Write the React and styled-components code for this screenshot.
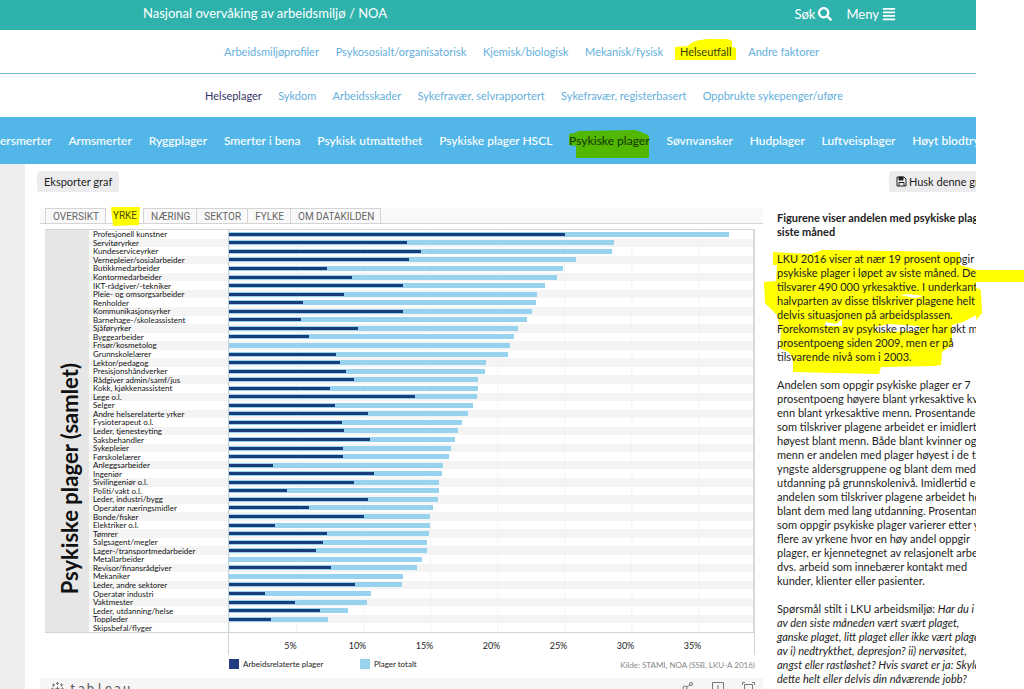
import React from "react";
import styled, { createGlobalStyle } from "styled-components";
import { FaAlignJustify, FaSearch } from "react-icons/fa";

const GlobalStyle = createGlobalStyle`
  * {
    box-sizing: border-box;
  }

  body {
    margin: 0;
    background: #fff;
    color: #222;
    font-family: Lato, "Open Sans", sans-serif;
    font-size: 11px;
  }

  a {
    color: inherit;
    text-decoration: none;
  }
`;

// Page frame
const Screen = styled.div`
  position: relative;
  height: 100vh;
  overflow: hidden;
`;

const Site = styled.div`
  height: 100%;
  margin-right: 48px;
  overflow: hidden;
`;

// Header
const Header = styled.header`
  display: flex;
  align-items: center;
  justify-content: space-between;
  height: 30px;
  padding: 0 80px 4px 143px;
  background: #2fb2ac;
  color: #fff;
`;

const SiteTitle = styled.a`
  font-size: 13px;
`;

const HeaderTools = styled.div`
  display: flex;
  gap: 14px;
`;

const HeaderButton = styled.button`
  display: flex;
  align-items: center;
  gap: 3px;
  padding: 2px 0 0;
  border: 0;
  background: none;
  color: #fff;
  font: inherit;
  font-size: 13px;

  svg {
    font-size: 14px;
  }
`;

// Navigation
const NavRow = styled.nav`
  display: flex;
  align-items: center;
  height: ${(props) => (props.$divided ? "44px" : "43px")};
  padding-left: ${(props) => props.$indent};
  border-bottom: ${(props) => (props.$divided ? "1px solid #74b9e4" : "0")};
  color: #64afdc;
`;

const NavList = styled.div`
  display: flex;
  flex: none;
  justify-content: space-between;
  width: ${(props) => props.$width};
  white-space: nowrap;
`;

const TopicBar = styled.nav`
  display: flex;
  align-items: center;
  height: 47px;
  background: #52b7e8;
  color: #fff;
  font-size: 12px;
  font-weight: 500;
`;

const NavLink = styled.a`
  position: relative;
  color: ${(props) => props.$color || "inherit"};
`;

const LinkText = styled.span`
  position: relative;
`;

// Highlighter strokes
const Marker = styled.svg`
  position: absolute;
  top: ${(props) => props.$top};
  left: ${(props) => props.$left};
  overflow: visible;
`;

const MarginMarker = styled.svg`
  position: absolute;
  top: 270px;
  right: 0;
`;

// Body
const Main = styled.main`
  display: flex;
  flex-direction: column;
  height: 100%;
  padding: 7px 0 0 12px;
  border-left: 25px solid #eee;
`;

const ActionRow = styled.div`
  display: flex;
  justify-content: space-between;
  margin-right: -31px;
`;

const ActionButton = styled.button`
  display: flex;
  align-items: center;
  gap: 2px;
  height: 21px;
  padding: 0 7px;
  border: 0;
  border-radius: 3px;
  background: #ececee;
  color: #222;
  font: inherit;
  white-space: nowrap;
`;

const Columns = styled.div`
  display: flex;
  gap: 14px;
  padding: 16px 0 0 3px;
`;

const Viz = styled.section`
  flex: 1;
  min-width: 0;
`;

const Tabs = styled.div`
  display: flex;
  height: 16px;
  padding-left: 5px;
  border-bottom: 1px solid #d4d4d4;
  background: #f9f9f9;
`;

const Tab = styled.button`
  position: relative;
  padding: 0 6px 0 7px;
  border: 1px solid #d4d4d4;
  border-width: ${(props) => (props.$active ? "0 1px 0 0" : "1px 1px 0 0")};
  background: ${(props) => (props.$active ? "#fff" : "#f9f9f9")};
  color: ${(props) => (props.$active ? "#4c4c00" : "#666")};
  font-family: Roboto, sans-serif;
  font-size: 10px;
  line-height: 15px;

  &:first-child {
    border-left-width: 1px;
  }
`;

// Chart
const Chart = styled.div`
  display: grid;
  grid-template-columns: 44px 139px 1fr;
  height: 404px;
  margin: 5px 8px 0 5px;
  border-top: 1px solid #d4d4d4;
  border-bottom: 1px solid #d4d4d4;
`;

const ChartTitle = styled.h2`
  display: flex;
  align-items: flex-end;
  justify-content: center;
  min-height: 0;
  margin: 0;
  padding: 0 0 38px 6px;
  background: #e6e6e6;
  color: #111;
  font-size: 22px;
  line-height: 24px;
  white-space: nowrap;

  span {
    writing-mode: vertical-rl;
    transform: rotate(180deg);
  }
`;

const Rows = styled.div`
  display: grid;
  grid-template-rows: repeat(47, 1fr);
  grid-column: span 2;
  min-height: 0;
`;

const Row = styled.div`
  display: grid;
  grid-template-columns: 139px 1fr;
  min-height: 0;

  &:nth-child(even) {
    background: #f4f4f4;
  }
`;

const RowLabel = styled.div`
  display: flex;
  align-items: center;
  min-height: 0;
  padding-left: 4px;
  color: #111;
  font-size: 8px;
  line-height: 8px;
  white-space: nowrap;
`;

const Track = styled.div`
  display: grid;
  align-items: center;
  min-height: 0;
  border-left: 1px solid #c4d4dc;
  border-right: 2px solid #d9d9d9;
  background: linear-gradient(to right, #f2f2f2 1px, transparent 1px) 0 0 / 12.8% 100%;
`;

const Bar = styled.div`
  grid-area: 1 / 1;
  height: ${(props) => (props.$work ? "3px" : "5px")};
  background: ${(props) => (props.$work ? "#1a3c78" : "#97d3ee")};
`;

const Axis = styled.div`
  display: flex;
  align-items: center;
  height: 22px;
  margin: 0 8px 0 188px;
  padding: 3px 0 0 28px;
  border-left: 1px solid #d4d4d4;
  border-right: 1px solid #d4d4d4;
  font-size: 9px;
`;

const Tick = styled.span`
  flex: 0 0 67px;
  width: 67px;
  text-align: center;
`;

const LegendRow = styled.div`
  display: flex;
  align-items: center;
  height: 18px;
  margin: 0 8px 5px 189px;
  font-size: 8px;
`;

const LegendItem = styled.span`
  display: flex;
  align-items: center;
  gap: 4px;
  width: 131px;

  &::before {
    width: 10px;
    height: 10px;
    background: ${(props) => props.$color};
    content: "";
  }
`;

const Source = styled.span`
  margin-left: auto;
  padding-top: 2px;
  color: #888;
`;

const VizFooter = styled.footer`
  display: flex;
  align-items: flex-start;
  justify-content: space-between;
  height: 26px;
  padding: 4px 8px 0 11px;
  background: #f6f6f6;
`;

const Brand = styled.a`
  display: flex;
  gap: 4px;
  color: #555;
`;

const Wordmark = styled.span`
  display: flex;
  font-size: 13px;
  line-height: 12px;
`;

const Letter = styled.span`
  width: 9px;
  text-align: center;
`;

const FooterTools = styled.div`
  display: flex;
  gap: 18px;
`;

const IconButton = styled.button`
  display: flex;
  padding: 0;
  border: 0;
  background: none;
  color: #777;
`;

// Text column
const Article = styled.article`
  position: relative;
  flex: 0 0 199px;
  width: 199px;
  padding-top: 3px;
  line-height: 14px;
  white-space: pre;

  h1 {
    position: relative;
    margin: 0 0 13px;
    font-size: 11px;
    line-height: 14px;
  }

  p {
    position: relative;
    margin: 0 0 14px;
  }
`;

const occupations = [
  ["Profesjonell kunstner", 25.1, 37.3],
  ["Servitøryrker", 13.3, 28.7],
  ["Kundeserviceyrker", 14.3, 28.6],
  ["Vernepleier/sosialarbeider", 13.4, 25.9],
  ["Butikkmedarbeider", 7.3, 24.9],
  ["Kontormedarbeider", 9.2, 24.5],
  ["IKT-rådgiver/-tekniker", 13, 23.6],
  ["Pleie- og omsorgsarbeider", 8.6, 23],
  ["Renholder", 5.5, 22.9],
  ["Kommunikasjonsyrker", 13, 22.6],
  ["Barnehage-/skoleassistent", 5.4, 22.2],
  ["Sjåføryrker", 9.6, 21.6],
  ["Byggearbeider", 6, 21.3],
  ["Frisør/kosmetolog", 0, 21],
  ["Grunnskolelærer", 8, 20.8],
  ["Lektor/pedagog", 8.3, 19.2],
  ["Presisjonshåndverker", 8.7, 19.1],
  ["Rådgiver admin/samf/jus", 9.3, 18.6],
  ["Kokk, kjøkkenassistent", 7.5, 18.6],
  ["Lege o.l.", 13.9, 18.5],
  ["Selger", 7.9, 18.2],
  ["Andre helserelaterte yrker", 10.4, 17.8],
  ["Fysioterapeut o.l.", 8.4, 17.4],
  ["Leder, tjenesteyting", 8.6, 17.1],
  ["Saksbehandler", 10.5, 16.9],
  ["Sykepleier", 8.5, 16.6],
  ["Førskolelærer", 8.5, 16.4],
  ["Anleggsarbeider", 3.3, 16],
  ["Ingeniør", 10.8, 15.9],
  ["Sivilingeniør o.l.", 9.3, 15.7],
  ["Politi/vakt o.l.", 4.3, 15.7],
  ["Leder, industri/bygg", 10.4, 15.6],
  ["Operatør næringsmidler", 6, 15.2],
  ["Bonde/fisker", 10.1, 15],
  ["Elektriker o.l.", 3.4, 15],
  ["Tømrer", 7.3, 14.9],
  ["Salgsagent/megler", 7, 14.8],
  ["Lager-/transportmedarbeider", 6.5, 14.8],
  ["Metallarbeider", 0, 14.4],
  ["Revisor/finansrådgiver", 7.6, 14],
  ["Mekaniker", 0, 13],
  ["Leder, andre sektorer", 9.4, 12.9],
  ["Operatør industri", 2.7, 10.6],
  ["Vaktmester", 4.9, 10.3],
  ["Leder, utdanning/helse", 6.8, 8.9],
  ["Toppleder", 3.1, 7.4],
  ["Skipsbefal/flyger", 0, 0],
];

const AXIS_MAX = 39.1;
const barWidth = (value) => ({ width: `${(value / AXIS_MAX) * 100}%` });

const SaveIcon = () => (
  <svg width="11" height="11" viewBox="0 0 11 11" fill="none" stroke="currentColor">
    <path d="M1 1H8L10 3V10H1Z" />
    <path d="M3 10V6.5H8V10" />
    <path d="M3 1V4H7V1Z" fill="currentColor" />
  </svg>
);

const App = () => {
  return (
    <Screen>
      <GlobalStyle />
      <MarginMarker width="48" height="60">
        <path d="M0 0 H48 V12 H0 Z M0 18 L4 19 L5 23 L6 43 L0 50 Z" fill="#ff0" />
      </MarginMarker>
      <Site>
        <Header>
          <SiteTitle href="#">Nasjonal overvåking av arbeidsmiljø / NOA</SiteTitle>
          <HeaderTools>
            <HeaderButton>
              Søk <FaSearch />
            </HeaderButton>
            <HeaderButton>
              Meny <FaAlignJustify />
            </HeaderButton>
          </HeaderTools>
        </Header>

        <NavRow $divided $indent="224px">
          <NavList $width="595px">
            <NavLink href="#">Arbeidsmiljøprofiler</NavLink>
            <NavLink href="#">Psykososialt/organisatorisk</NavLink>
            <NavLink href="#">Kjemisk/biologisk</NavLink>
            <NavLink href="#">Mekanisk/fysisk</NavLink>
            <NavLink href="#" $color="#3c3c00">
              <Marker $top="-6px" $left="-5px" width="61" height="21">
                <path
                  d="M0 8 L13 7 C16 3 22 1 32 0 L53 0 L57 2 L57 8 L61 9 L61 21 L0 21 Z"
                  fill="#ff0"
                />
              </Marker>
              <LinkText>Helseutfall</LinkText>
            </NavLink>
            <NavLink href="#">Andre faktorer</NavLink>
          </NavList>
        </NavRow>
        <NavRow $indent="205px">
          <NavList $width="638px">
            <NavLink href="#" $color="#333366">Helseplager</NavLink>
            <NavLink href="#">Sykdom</NavLink>
            <NavLink href="#">Arbeidsskader</NavLink>
            <NavLink href="#">Sykefravær, selvrapportert</NavLink>
            <NavLink href="#">Sykefravær, registerbasert</NavLink>
            <NavLink href="#">Oppbrukte sykepenger/uføre</NavLink>
          </NavList>
        </NavRow>
        <TopicBar>
          <NavList $width="992px">
            <NavLink href="#">ersmerter</NavLink>
            <NavLink href="#">Armsmerter</NavLink>
            <NavLink href="#">Ryggplager</NavLink>
            <NavLink href="#">Smerter i bena</NavLink>
            <NavLink href="#">Psykisk utmattethet</NavLink>
            <NavLink href="#">Psykiske plager HSCL</NavLink>
            <NavLink href="#" $color="#143c00">
              <Marker $top="-3px" $left="0" width="80" height="28">
                <path
                  d="M0 4 L6 3 L10 1 L66 0 C72 2 78 4 80 6 L80 28 L7 28 L7 16 L0 15 Z"
                  fill="#52b700"
                />
              </Marker>
              <LinkText>Psykiske plager</LinkText>
            </NavLink>
            <NavLink href="#">Søvnvansker</NavLink>
            <NavLink href="#">Hudplager</NavLink>
            <NavLink href="#">Luftveisplager</NavLink>
            <NavLink href="#">Høyt blodtrykk</NavLink>
          </NavList>
        </TopicBar>

        <Main>
          <ActionRow>
            <ActionButton>Eksporter graf</ActionButton>
            <ActionButton>
              <SaveIcon /> Husk denne grafen
            </ActionButton>
          </ActionRow>

          <Columns>
            <Viz>
              <Tabs>
                <Tab>OVERSIKT</Tab>
                <Tab $active>
                  <Marker $top="-1px" $left="5px" width="29" height="19">
                    <path d="M0 0 L29 0 L28 18 L2 19 Z" fill="#ff0" />
                  </Marker>
                  <LinkText>YRKE</LinkText>
                </Tab>
                <Tab>NÆRING</Tab>
                <Tab>SEKTOR</Tab>
                <Tab>FYLKE</Tab>
                <Tab>OM DATAKILDEN</Tab>
              </Tabs>

              <Chart>
                <ChartTitle>
                  <span>Psykiske plager (samlet)</span>
                </ChartTitle>
                <Rows>
                  {occupations.map(([name, work, total]) => (
                    <Row key={name}>
                      <RowLabel>{name}</RowLabel>
                      <Track>
                        <Bar style={barWidth(total)} />
                        <Bar $work style={barWidth(work)} />
                      </Track>
                    </Row>
                  ))}
                </Rows>
              </Chart>
              <Axis>
                {[5, 10, 15, 20, 25, 30, 35].map((tick) => (
                  <Tick key={tick}>{tick}%</Tick>
                ))}
              </Axis>
              <LegendRow>
                <LegendItem $color="#213c80">Arbeidsrelaterte plager</LegendItem>
                <LegendItem $color="#97d3ee">Plager totalt</LegendItem>
                <Source>Kilde: STAMI, NOA (SSB, LKU-A 2016)</Source>
              </LegendRow>

              <VizFooter>
                <Brand href="#" aria-label="tableau">
                  <svg width="13" height="13" viewBox="0 0 13 13" stroke="#777" fill="none">
                    <path d="M6.5 0v3M5 1.5h3M6.5 4.5v4M4.5 6.5h4M2.5 1.5v3M1 3h3M10.5 1.5v3M9 3h3M1.5 5.5v2M0.5 6.5h2M11.5 5.5v2M10.5 6.5h2M2.5 8.5v3M1 10h3M10.5 8.5v3M9 10h3M6.5 10v3M5 11.5h3" />
                  </svg>
                  <Wordmark>
                    {[..."tableau"].map((letter, i) => (
                      <Letter key={i}>{letter}</Letter>
                    ))}
                  </Wordmark>
                </Brand>
                <FooterTools>
                  <IconButton aria-label="Del">
                    <svg width="12" height="12" viewBox="0 0 12 12" fill="none" stroke="currentColor">
                      <circle cx="3" cy="6" r="2" />
                      <circle cx="9" cy="2" r="1.5" />
                      <circle cx="9" cy="9" r="1.5" />
                      <path d="M4.5 5L8 3M4.5 7L8 8.5" />
                    </svg>
                  </IconButton>
                  <IconButton aria-label="Last ned">
                    <svg width="12" height="12" viewBox="0 0 12 12" fill="none" stroke="currentColor">
                      <path d="M4 8.5H0.5V0.5H11.5V8.5H8M6 3V11M4 9L6 11L8 9" />
                    </svg>
                  </IconButton>
                  <IconButton aria-label="Fullskjerm">
                    <svg width="13" height="12" viewBox="0 0 13 12" fill="none" stroke="currentColor">
                      <path d="M0.5 3V0.5H3M10 0.5H12.5V3M0.5 9V11.5H3M10 11.5H12.5V9M2.5 2.5H10.5V9.5H2.5Z" />
                    </svg>
                  </IconButton>
                </FooterTools>
              </VizFooter>
            </Viz>

            <Article>
              <Marker $top="41px" $left="-13px" width="218" height="126">
                <path
                  d="M9 3 L46 5 L59 1 L196 3 L196 16 L209 20 L213 21 V33 L216 43 L218 63 L199 73 L188 76 L188 96 L178 103 L177 116 L169 117 L117 118 L115 125 L29 123 L29 113 L26 104 L16 99 L17 83 L13 66 L1 54 L0 33 L12 32 L13 16 L9 16 Z"
                  fill="#ff0"
                />
                <path
                  d="M136 46 L145 45 L160 47 L150 49 Z M60 77 L62 73 L72 75 L78 70 L78 77 Z M110 78 L124 75 L155 77 L156 82 L114 83 Z"
                  fill="#fff"
                />
              </Marker>
              <h1>{`Figurene viser andelen med psykiske plager
siste måned`}</h1>
              <p>{`LKU 2016 viser at nær 19 prosent oppgir
psykiske plager i løpet av siste måned. Det
tilsvarer 490 000 yrkesaktive. I underkant av
halvparten av disse tilskriver plagene helt eller
delvis situasjonen på arbeidsplassen.
Forekomsten av psykiske plager har økt med
prosentpoeng siden 2009, men er på
tilsvarende nivå som i 2003.`}</p>
              <p>{`Andelen som oppgir psykiske plager er 7
prosentpoeng høyere blant yrkesaktive kvinner
enn blant yrkesaktive menn. Prosentandelen
som tilskriver plagene arbeidet er imidlertid
høyest blant menn. Både blant kvinner og
menn er andelen med plager høyest i de to
yngste aldersgruppene og blant dem med
utdanning på grunnskolenivå. Imidlertid er
andelen som tilskriver plagene arbeidet høyest
blant dem med lang utdanning. Prosentandelen
som oppgir psykiske plager varierer etter yrke
flere av yrkene hvor en høy andel oppgir
plager, er kjennetegnet av relasjonelt arbeid,
dvs. arbeid som innebærer kontakt med
kunder, klienter eller pasienter.`}</p>
              <p>
                Spørsmål stilt i LKU arbeidsmiljø:{" "}
                <em>{`Har du i løpet
av den siste måneden vært svært plaget,
ganske plaget, litt plaget eller ikke vært plaget
av i) nedtrykthet, depresjon? ii) nervøsitet,
angst eller rastløshet? Hvis svaret er ja: Skyldes
dette helt eller delvis din nåværende jobb?`}</em>
              </p>
            </Article>
          </Columns>
        </Main>
      </Site>
    </Screen>
  );
};

export default App;
